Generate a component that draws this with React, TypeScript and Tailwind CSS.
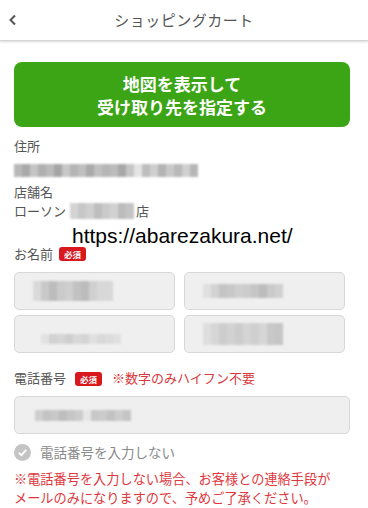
import React from "react";

const FONT = { fontFamily: '"Noto Sans CJK JP", "Noto Sans", sans-serif' };

// Pixelated placeholder standing in for blurred personal data.
function Blur({ cells, h = 14 }: { cells: string[]; h?: number }) {
  return (
    <div className="flex blur-[1.2px]" style={{ height: h }}>
      {cells.map((c, i) => (
        <div key={i} className="w-[8px] h-full" style={{ background: c }} />
      ))}
    </div>
  );
}

function Badge() {
  return (
    <span className="inline-flex items-center justify-center h-[14px] px-[5px] rounded-[3px] bg-[#d9181e] text-white text-[8.5px] font-bold leading-none">
      必須
    </span>
  );
}

function Field({ children, className = "" }: { children?: React.ReactNode; className?: string }) {
  return (
    <div
      className={
        "h-[38px] rounded-[5px] border border-[#d8d8d8] bg-[#efefef] flex items-center " + className
      }
    >
      {children}
    </div>
  );
}

export default function App() {
  return (
    <div className="w-[368px] h-[508px] bg-white overflow-hidden text-[#555]" style={FONT}>
      <header className="relative h-[41px] flex items-center justify-center border-b border-[#d4d4d4] shadow-[0_1px_2px_rgba(0,0,0,0.15)]">
        <svg className="absolute left-[8px] top-[14px]" width="10" height="12" viewBox="0 0 10 12">
          <path d="M7 1.5 L2.5 6 L7 10.5" fill="none" stroke="#555" strokeWidth="2" />
        </svg>
        <span className="text-[15px] text-[#555] tracking-[0.5px]">ショッピングカート</span>
      </header>

      <div className="pl-[14px] pr-[18px] pt-[21px]">
        <button className="w-[336px] h-[65px] rounded-[8px] bg-[#3ba515] text-white text-[17px] font-bold leading-[23px] flex flex-col items-center justify-center">
          <span>地図を表示して</span>
          <span>受け取り先を指定する</span>
        </button>

        <div className="mt-[9px] text-[13px] leading-[19px]">住所</div>
        <div className="mt-[5px] h-[21px] flex items-center">
          <Blur
            h={13}
            cells={[
              "#b8b8b8", "#a9a9a9", "#c4c4c4", "#b0b0b0", "#bbbbbb", "#a5a5a5", "#c8c8c8", "#b4b4b4",
              "#bfbfbf", "#aaaaaa", "#c0c0c0", "#b6b6b6", "#bcbcbc", "#a8a8a8", "#c6c6c6", "#e4e4e4",
              "#bdbdbd", "#cfcfcf", "#b3b3b3", "#c9c9c9", "#b9b9b9", "#d0d0d0", "#b7b7b7",
            ]}
          />
        </div>
        <div className="text-[13px] leading-[19px] mt-[1px]">店舗名</div>
        <div className="text-[13px] leading-[20px] flex items-center">
          <span>ローソン</span>
          <div className="ml-[4px] mr-[2px]">
            <Blur
              h={16}
              cells={["#d4d4d4", "#c7c7c7", "#cfcfcf", "#bebebe", "#cacaca", "#d2d2d2", "#bcbcbc", "#c4c4c4"]}
            />
          </div>
          <span>店</span>
        </div>

        <div
          className="ml-[58px] mt-[4px] text-[21px] leading-[22px] text-black"
          style={{ fontFamily: '"Liberation Sans", Arial, sans-serif' }}
        >
          https://abarezakura.net/
        </div>

        <div className="-mt-[2px] flex items-center gap-[6px] text-[13px] leading-[18px]">
          <span>お名前</span>
          <Badge />
        </div>

        <div className="mt-[9px] w-[331px] grid grid-cols-2 gap-x-[9px] gap-y-[5px]">
          <Field className="pl-[18px]">
            <Blur h={20} cells={["#dadada", "#c9c9c9", "#bdbdbd", "#cacaca", "#cfcfcf", "#c2c2c2", "#bcbcbc", "#d0d0d0", "#d8d8d8", "#d8d8d8"]} />
          </Field>
          <Field className="pl-[18px]">
            <Blur h={14} cells={["#e0e0e0", "#d2d2d2", "#c4c4c4", "#c8c8c8", "#cfcfcf", "#cccccc", "#c6c6c6", "#bcbcbc", "#cacaca", "#d0d0d0"]} />
          </Field>
          <Field className="pl-[26px] pt-[10px]">
            <Blur h={10} cells={["#e2e2e2", "#d2d2d2", "#d6d6d6", "#cecece", "#d8d8d8", "#d4d4d4", "#e0e0e0", "#d8d8d8", "#dcdcdc", "#e0e0e0"]} />
          </Field>
          <Field className="pl-[18px]">
            <Blur h={22} cells={["#dedede", "#d6d6d6", "#cdcdcd", "#d2d2d2", "#cccccc", "#d4d4d4", "#cfcfcf", "#d6d6d6", "#c8c8c8", "#c6c6c6"]} />
          </Field>
        </div>

        <div className="mt-[16px] flex items-center text-[13px] leading-[18px]">
          <span>電話番号</span>
          <span className="ml-[9px]">
            <Badge />
          </span>
          <span className="ml-[10px] text-[#d9383c]">※数字のみハイフン不要</span>
        </div>

        <Field className="mt-[9px] w-[336px] pl-[20px]">
          <Blur
            h={11}
            cells={[
              "#cfcfcf", "#c3c3c3", "#c8c8c8", "#bebebe", "#c6c6c6", "#cccccc", "#e6e6e6", "#c8c8c8",
              "#cbcbcb", "#c2c2c2", "#cdcdcd", "#c4c4c4",
            ]}
          />
        </Field>

        <div className="mt-[8px] flex items-center gap-[9px]">
          <svg width="17" height="17" viewBox="0 0 17 17">
            <circle cx="8.5" cy="8.5" r="8.5" fill="#c4c4c4" />
            <path d="M4.8 8.7 L7.4 11.2 L12.2 5.9" fill="none" stroke="#fff" strokeWidth="1.8" />
          </svg>
          <span className="text-[13.5px] text-[#8a8a8a]">電話番号を入力しない</span>
        </div>

        <div className="mt-[7px] text-[13.2px] leading-[19px] text-[#e0373d] whitespace-nowrap">
          <div>※電話番号を入力しない場合、お客様との連絡手段が</div>
          <div>メールのみになりますので、予めご了承ください。</div>
        </div>
      </div>
    </div>
  );
}
